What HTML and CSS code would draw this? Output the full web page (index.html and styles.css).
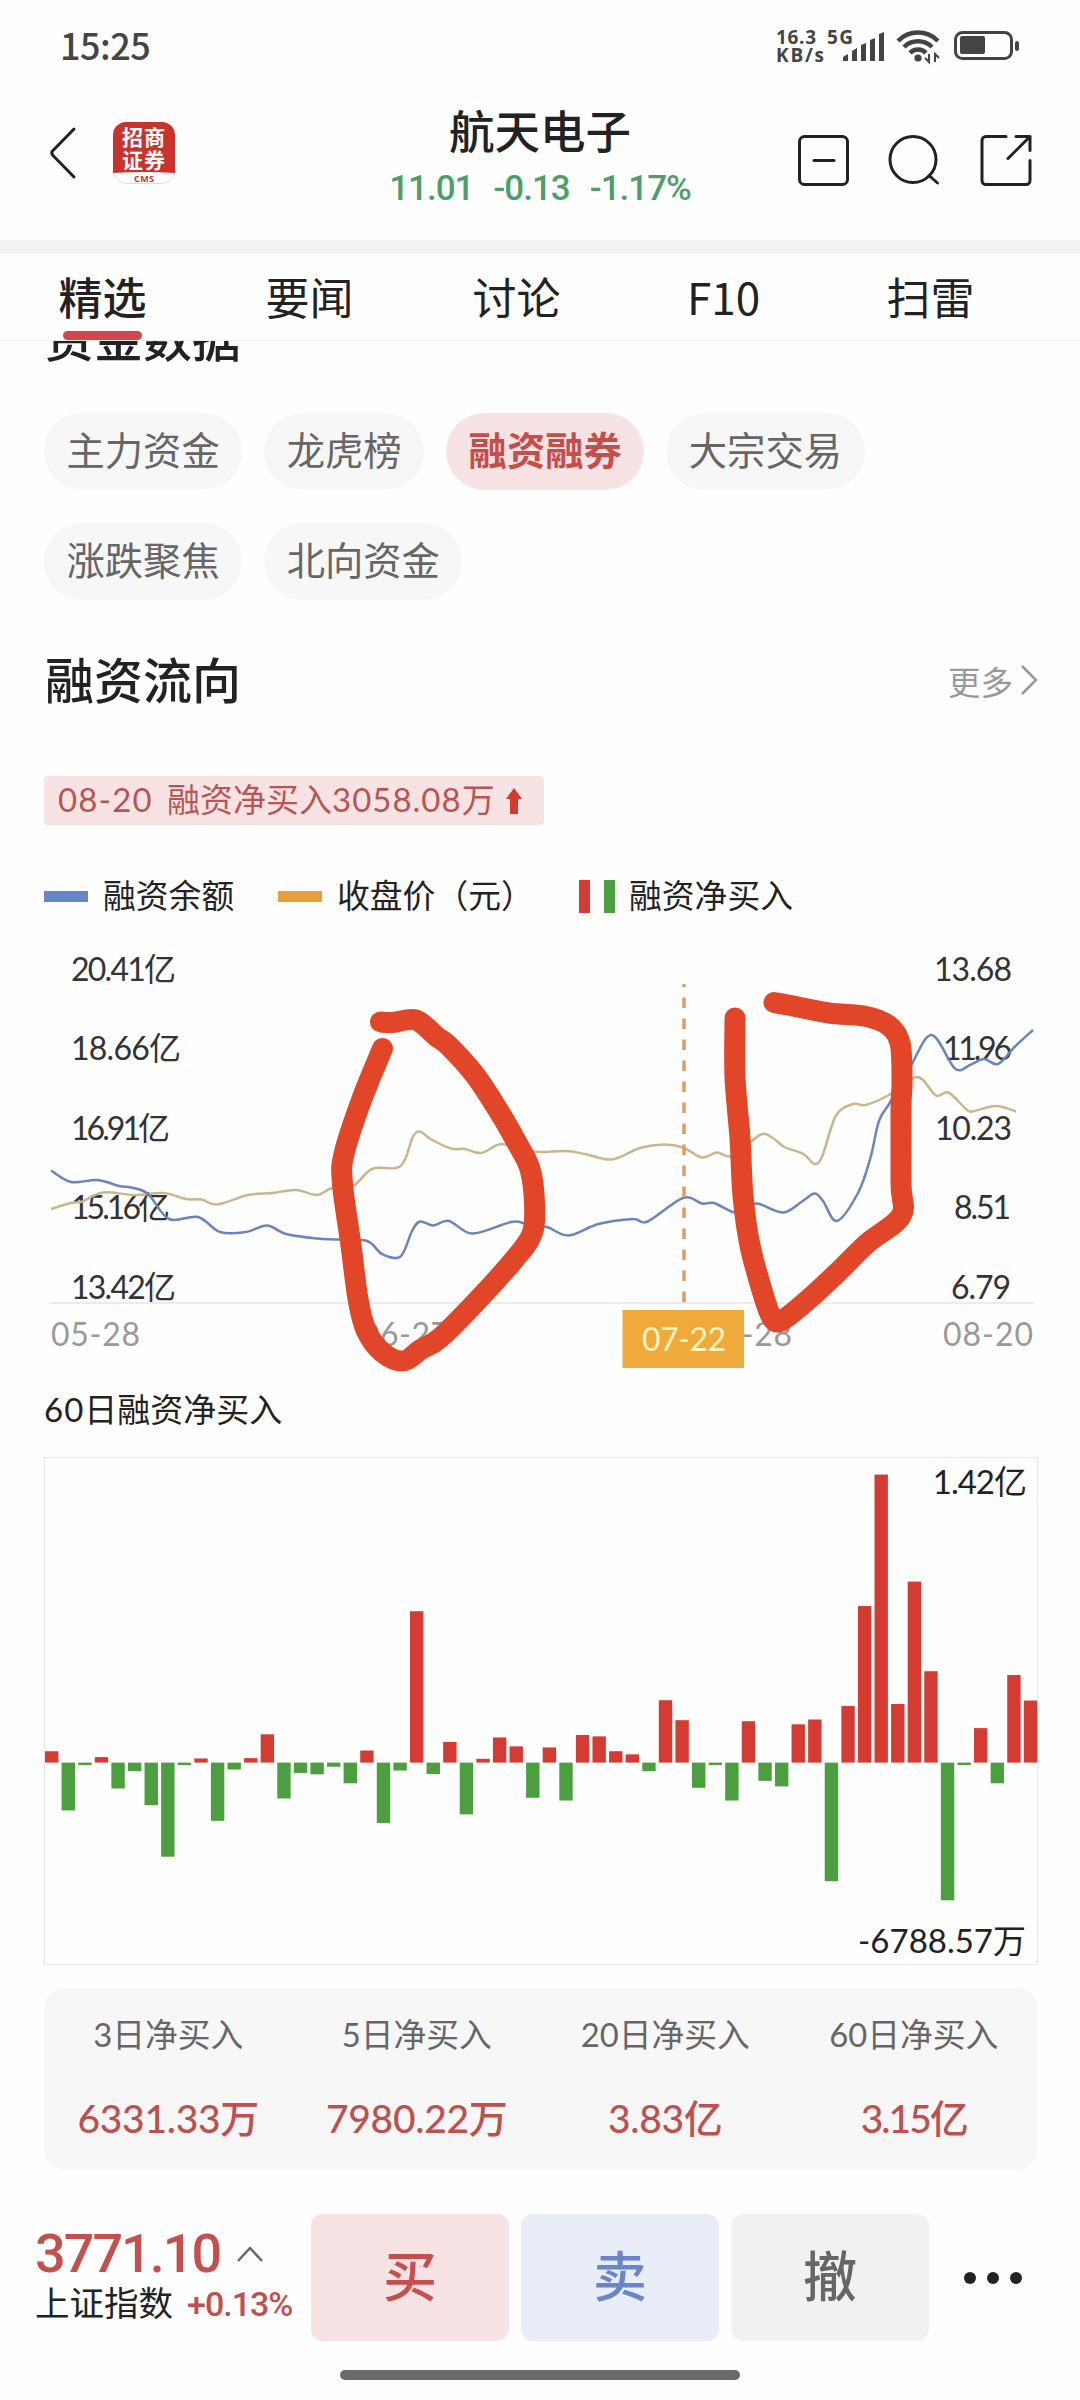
FILE: index.html
```html
<!DOCTYPE html>
<html lang="zh-CN">
  <head>
    <title>航天电子</title>
    <meta charset="UTF-8">
    <link rel="stylesheet" href="styles.css">
  </head>
  <body>
    <div class="status-bar">
      <span class="time">15:25</span>
      <svg class="status-icons" width="250" height="60" viewBox="770 15 250 60">
        <g class="net">
          <text x="776" y="44" textLength="40">16.3</text>
          <text x="776" y="62" textLength="48">KB/s</text>
          <text x="827" y="44" textLength="26">5G</text>
        </g>
        <path d="M843 61v-4l5-3v7zM852 61V51l5-3v13zM861 61V45l5-2v18zM870 61V40l5-2v23zM879 61V34l5-2v29z"/>
        <g class="wifi">
          <path d="M898 41a28 28 0 0 1 40 0"/>
          <path d="M904 47a20 20 0 0 1 28 0"/>
          <path d="M910 53a11 11 0 0 1 16 0"/>
        </g>
        <circle cx="918" cy="58" r="3.6"/>
        <path d="M929 54v8l-4-4M935 62v-8l4 4" class="thin"/>
        <rect x="955.5" y="32.5" width="56" height="26" rx="7" class="battery"/>
        <rect x="960" y="36" width="25" height="18" rx="2"/>
        <rect x="1015" y="41" width="4" height="10" rx="2"/>
      </svg>
    </div>

    <div class="header">
      <div class="header-left">
        <svg width="28" height="54" viewBox="0 0 28 54" class="line-icon"><path d="M25 3L3.500 25Q2 27 3.500 29L25 51"/></svg>
        <svg class="logo" width="62" height="62" viewBox="0 0 62 62">
          <rect x="0.500" y="0.500" width="61" height="61" rx="13" fill="#fff" stroke="#ddd"/>
          <path d="M0 51V13A13 13 0 0 1 13 0H49A13 13 0 0 1 62 13V51Q31 49 0 51z" fill="#c8342d"/>
          <text x="9" y="23" textLength="43" class="logo-cn">招商</text>
          <text x="9" y="46" textLength="43" class="logo-cn">证券</text>
          <text x="21" y="59.500" textLength="20" class="logo-en">CMS</text>
        </svg>
      </div>
      <div class="stock">
        <div class="stock-name">航天电子</div>
        <div class="stock-price"><span>11.01</span><span>-0.13</span><span>-1.17%</span></div>
      </div>
      <svg class="header-icons line-icon" width="240" height="60" viewBox="795 130 240 60">
        <rect x="799.500" y="136.500" width="48" height="48" rx="5"/>
        <path d="M814 160.500h20"/>
        <circle cx="913" cy="159.500" r="23"/>
        <path d="M929 175.500l8.500 7.500"/>
        <path d="M1006 136.500h-20a4 4 0 0 0-4 4v40a4 4 0 0 0 4 4h40a4 4 0 0 0 4-4v-20M1016 136.500h14v14M1030 136.500l-22 22"/>
      </svg>
    </div>

    <div class="tabs">
      <div class="tab active">精选</div>
      <div class="tab">要闻</div>
      <div class="tab">讨论</div>
      <div class="tab">F10</div>
      <div class="tab">扫雷</div>
    </div>

    <div class="content">
      <div class="clipped"><h2>资金数据</h2></div>

      <div class="chips">
        <span class="chip">主力资金</span>
        <span class="chip">龙虎榜</span>
        <span class="chip selected">融资融券</span>
        <span class="chip">大宗交易</span>
        <span class="chip">涨跌聚焦</span>
        <span class="chip">北向资金</span>
      </div>

      <div class="section-title">
        <h2>融资流向</h2>
        <span class="more">更多<svg width="18" height="32" viewBox="0 0 18 32"><path d="M2 2l14 14L2 30"/></svg></span>
      </div>

      <div class="tag">
        <span class="tag-date">08-20</span>
        <span>融资净买入<span class="num">3058.08</span>万</span>
        <svg width="16" height="26" viewBox="0 0 16 26"><path d="M8 0l8 11h-4v15H4V11H0z"/></svg>
      </div>

      <div class="legend">
        <span class="item"><i class="dash blue"></i>融资余额</span>
        <span class="item"><i class="dash orange"></i>收盘价（元）</span>
        <span class="item last"><i class="bar red"></i><i class="bar green"></i>融资净买入</span>
      </div>
    </div>

    <svg class="line-chart" width="1080" height="440" viewBox="0 940 1080 440">
      <g class="axis">
        <text x="71" y="981" textLength="105">20.41亿</text>
        <text x="71" y="1060" textLength="110">18.66亿</text>
        <text x="71" y="1140" textLength="99">16.91亿</text>
        <text x="71" y="1219" textLength="99">15.16亿</text>
        <text x="71" y="1299" textLength="105">13.42亿</text>
        <text x="934" y="981" textLength="78">13.68</text>
        <text x="943" y="1060" textLength="69">11.96</text>
        <text x="935" y="1140" textLength="77">10.23</text>
        <text x="954" y="1219" textLength="57">8.51</text>
        <text x="951" y="1299" textLength="60">6.79</text>
      </g>
      <path d="M50 1303H1034" stroke="#ebebeb" stroke-width="2"/>
      <g class="dates">
        <text x="51" y="1346" textLength="89">05-28</text>
        <text x="361" y="1346" textLength="88">06-27</text>
        <text x="703" y="1346" textLength="89">07-28</text>
        <text x="943" y="1346" textLength="90">08-20</text>
      </g>
      <path id="price" class="curve" stroke="#c9b68d"/>
      <path id="balance" class="curve" stroke="#6a85bb"/>
      <path d="M684 1302V984" stroke="#dd9c66" stroke-width="3.500" stroke-dasharray="10.500 10.500"/>
      <rect x="622.500" y="1310" width="121.500" height="58" fill="#f0a93b"/>
      <text x="642" y="1351" textLength="84" class="cursor-date">07-22</text>
      <path id="mark1" class="mark"/>
      <path id="mark2" class="mark"/>
    </svg>

    <div class="content">
      <div class="bar-title"><span class="num">60</span>日融资净买入</div>
      <div class="bar-chart">
        <svg id="bars" width="994" height="508" viewBox="44 1457 994 508"></svg>
        <span class="max">1.42亿</span>
        <span class="min">-6788.57万</span>
      </div>

      <div class="summary">
        <div><p>3日净买入</p><b>6331.33万</b></div>
        <div><p>5日净买入</p><b>7980.22万</b></div>
        <div><p>20日净买入</p><b>3.83亿</b></div>
        <div><p>60日净买入</p><b class="tight">3.15亿</b></div>
      </div>
    </div>

    <div class="footer">
      <div class="index">
        <div class="index-value">3771.10<svg width="28" height="18" viewBox="0 0 28 18"><path d="M2 16L14 3l12 13"/></svg></div>
        <div class="index-name">上证指数<span>+0.13%</span></div>
      </div>
      <div class="btn buy">买</div>
      <div class="btn sell">卖</div>
      <div class="btn cancel">撤</div>
      <div class="dots"><i></i><i></i><i></i></div>
    </div>
    <div class="home-bar"></div>

    <script src="chart.js"></script>
  </body>
</html>
```
FILE: styles.css
```css
* {
  box-sizing: border-box;
}

body {
  margin: 0;
  width: 1080px;
  height: 2400px;
  overflow: hidden;
  background: #fefefe;
  color: #222;
  font-family: Lato, "Noto Sans CJK SC", sans-serif;
}

h2, p {
  margin: 0;
}

/* status bar */
.status-bar {
  display: flex;
  justify-content: space-between;
  height: 92px;
  padding: 15px 60px 0 60px;
  color: #444;
}

.time {
  margin-top: 9px;
  font: 500 36px/40px "Noto Sans CJK SC", sans-serif;
  letter-spacing: -0.5px;
}

.status-icons {
  fill: #444;
}

.net {
  font: bold 19px "Open Sans", sans-serif;
}

.wifi, .thin, .battery {
  fill: none;
  stroke: #444;
}

.wifi {
  stroke-width: 4.5;
}

.thin {
  stroke-width: 2;
}

.battery {
  stroke-width: 3;
}

/* header */
.header {
  display: flex;
  justify-content: space-between;
  height: 162px;
  padding: 0 45px 0 49px;
  border-bottom: 14px solid #f2f3f5;
}

.line-icon {
  fill: none;
  stroke: #222;
  stroke-width: 3;
  stroke-linecap: round;
  stroke-linejoin: round;
}

.header-left {
  display: flex;
  align-items: center;
  gap: 36px;
  width: 240px;
  height: 122px;
}

.logo-cn {
  fill: #fff;
  font: bold 21px "Noto Sans CJK SC", sans-serif;
}

.logo-en {
  fill: #c8342d;
  font: bold 9px "Open Sans", sans-serif;
}

.stock {
  width: 320px;
  margin-right: 4px;
  text-align: center;
}

.stock-name {
  margin-top: 10px;
  font-size: 45.5px;
  line-height: 60px;
  font-weight: 500;
}

.stock-price {
  display: flex;
  justify-content: center;
  gap: 20px;
  padding-top: 2px;
  color: #4f9e68;
  font: 500 35px/50px Roboto, sans-serif;
  letter-spacing: -1px;
}

.header-icons {
  margin-top: 38px;
}

/* tabs */
.tabs {
  display: flex;
  height: 87px;
  border-bottom: 1px solid #ececec;
}

.tab {
  display: flex;
  flex-direction: column;
  align-items: center;
  width: 207px;
  padding: 12px 2px 0 0;
  font: 44px/60px "Noto Sans CJK SC", sans-serif;
}

.active {
  font-weight: 500;
}

.active::after {
  content: "";
  width: 79px;
  height: 9px;
  margin-top: 5px;
  border-radius: 5px;
  background: #d2484a;
}

.content {
  padding: 0 42px 0 44px;
}

h2 {
  padding-left: 1px;
  font-size: 49px;
  line-height: 60px;
  font-weight: 500;
}

.clipped {
  height: 72px;
  overflow: hidden;
}

.clipped h2 {
  margin-top: -33px;
}

/* filter chips */
.chips {
  display: flex;
  flex-wrap: wrap;
  gap: 33px 22px;
  width: 900px;
}

.chip {
  height: 77px;
  padding: 0 22.5px;
  border-radius: 39px;
  background: #f7f7f7;
  color: #666;
  font-size: 38.3px;
  line-height: 75px;
}

.selected {
  background: #f7e3e3;
  color: #c44e4c;
  font-weight: bold;
}

.section-title {
  display: flex;
  justify-content: space-between;
  align-items: center;
  height: 60px;
  margin-top: 50px;
}

.more {
  display: flex;
  align-items: center;
  gap: 7px;
  color: #999;
  font-size: 32.5px;
}

.more svg {
  fill: none;
  stroke: #999;
  stroke-width: 2.5;
}

.tag {
  display: flex;
  align-items: center;
  width: 500px;
  height: 49px;
  margin-top: 66px;
  padding-left: 14px;
  border-radius: 4px;
  background: #f7e3e3;
  color: #b85553;
  font-size: 33px;
  line-height: 44px;
}

.tag > span {
  margin-bottom: 3px;
}

.tag-date {
  width: 109px;
  letter-spacing: 1.2px;
}

.tag .num {
  letter-spacing: 1px;
}

.tag svg {
  margin-left: 11px;
  fill: #d33a32;
}

.legend {
  display: flex;
  height: 46px;
  margin-top: 48px;
  font-size: 32.8px;
  line-height: 46px;
}

.item {
  display: flex;
  align-items: center;
  width: 234px;
  white-space: nowrap;
}

.item:nth-child(2) {
  width: 301px;
}

.dash {
  width: 44px;
  height: 11px;
  margin-right: 15px;
}

.bar {
  width: 11px;
  height: 33px;
  margin-right: 14px;
}

.blue {
  background: #6786ca;
}

.orange {
  background: #eaa03a;
}

.red {
  background: #d43c33;
}

.green {
  background: #4b9f3e;
}

/* line chart */
.line-chart {
  display: block;
  margin-top: 21px;
}

.axis {
  fill: #333;
  font-size: 32px;
}

.dates {
  fill: #999;
  font-size: 32px;
}

.cursor-date {
  fill: #fff5c0;
  font-size: 32px;
}

.curve {
  fill: none;
  stroke-width: 2.5;
}

.mark {
  fill: none;
  stroke: #e14628;
  stroke-width: 21;
  stroke-linecap: round;
  stroke-linejoin: round;
}

/* bar chart */
.bar-title {
  height: 77px;
  padding-top: 6px;
  font-size: 33px;
  line-height: 46px;
}

.bar-title .num {
  letter-spacing: 1px;
}

.bar-chart {
  position: relative;
  height: 508px;
  box-shadow: inset 0 0 0 1px #e6e6e6;
}

.bar-chart svg {
  display: block;
}

.max, .min {
  position: absolute;
  right: 12px;
  font-size: 33px;
  line-height: 46px;
}

.max {
  top: 1px;
  letter-spacing: -1px;
}

.min {
  bottom: 2px;
}

.summary {
  display: flex;
  height: 182px;
  margin-top: 23px;
  border-radius: 21px;
  background: #f7f7f7;
  text-align: center;
}

.summary div {
  flex: 1;
}

.summary p {
  margin-top: 24px;
  color: #666;
  font-size: 32.8px;
  line-height: 46px;
}

.summary b {
  display: block;
  margin-top: 32px;
  color: #bd514f;
  font-size: 39px;
  line-height: 56px;
  font-weight: 500;
  letter-spacing: -0.3px;
}

.summary .tight {
  letter-spacing: -2px;
}

/* footer */
.footer {
  display: flex;
  gap: 12px;
  height: 127px;
  margin-top: 44px;
  padding-left: 35px;
}

.index {
  width: 264px;
  padding-top: 9px;
  white-space: nowrap;
}

.index-value {
  display: flex;
  align-items: center;
  gap: 16px;
  height: 62px;
  color: #c4504e;
  font: 500 54px/60px Roboto, sans-serif;
  letter-spacing: -2px;
}

.index-value path {
  fill: none;
  stroke: #666;
  stroke-width: 2.5;
}

.index-name {
  font-size: 34.500px;
  line-height: 36px;
}

.index-name span {
  margin-left: 14px;
  color: #bd514f;
  font: 500 34px/36px Roboto, sans-serif;
  letter-spacing: -1px;
}

.btn {
  width: 198px;
  border-radius: 12px;
  font-size: 54px;
  line-height: 126px;
  font-weight: 500;
  text-align: center;
}

.buy {
  background: #f7e3e3;
  color: #c4504e;
}

.sell {
  background: #e8edf8;
  color: #6a86c6;
}

.cancel {
  background: #f1f1f1;
  color: #666;
}

.dots {
  display: flex;
  align-items: center;
  gap: 11px;
  padding-left: 23px;
}

.dots i {
  width: 12px;
  height: 12px;
  border-radius: 50%;
  background: #222;
}

.home-bar {
  width: 400px;
  height: 10px;
  margin: 29px auto 0;
  border-radius: 5px;
  background: #6a6a6a;
}
```
FILE: chart.js
```js
var balance = [[51,1170.5],[71,1182],[97.5,1180],[119,1186],[131,1187.5],[148,1194],[169,1219],[198,1217],[220,1232],[246,1232],[267,1225.5],[286,1234],[317,1238.5],[336,1239.5],[367,1241],[382,1254],[400.5,1256.5],[412,1231],[420,1221.5],[433,1225.5],[449,1221],[472.5,1233.5],[511,1222],[527,1224],[547,1227],[568.5,1235.5],[598.5,1224],[633,1219],[647.5,1221.5],[683,1198],[702,1203.5],[714,1203],[733,1212],[745,1210],[757,1203.5],[783,1212.5],[802,1201.5],[814.5,1193.5],[823,1201],[837,1221],[858.5,1192],[870.5,1157.5],[879,1121],[890,1102.5],[910,1067.5],[931.5,1035],[955,1068.5],[970,1065],[984,1059],[998,1064],[1015,1046.5],[1033,1030]];

var price = [[51,1209],[70.5,1203],[82.5,1201.5],[103,1192.5],[134,1195],[163.5,1193],[186,1199],[201.5,1199.5],[217,1204.5],[248,1195],[272,1193],[296,1190],[317,1195],[332,1188],[353,1186],[372,1169],[396,1168],[405,1159.5],[413,1136.5],[420,1131.5],[430.5,1139],[451,1148.5],[465,1149],[481,1153],[501,1144],[520,1150],[540,1152],[566,1151],[585,1154],[612,1159.5],[640,1148],[664,1144.5],[683,1147.5],[702,1157.5],[717,1152.5],[733,1156],[760,1135],[772,1137.5],[784.5,1147],[803.5,1154],[814.5,1164],[822.5,1155.5],[836,1115.5],[853,1104],[865.5,1105],[888,1095.5],[917,1077],[936,1095.5],[948.5,1092.5],[967,1110],[974,1111],[996,1106],[1016,1111.5]];

var mark1 = [[380.5,1022],[393,1022.5],[416,1020],[437,1037],[448,1045],[475,1075],[499,1111.5],[516.5,1142],[530,1169],[534.5,1203.5],[532,1234],[513,1261],[475,1303],[440,1338],[420,1350],[403,1361],[382,1352],[366,1330],[358,1299],[351,1245.5],[342.5,1184],[344,1154],[361.5,1100],[382.5,1048.5]];

var mark2 = [[774,1002.5],[788,1005],[829,1013],[864,1016],[888,1025],[900,1043],[902,1081],[901,1108],[901,1184],[901,1216],[867,1243.5],[836,1274],[802,1305],[781,1321],[772,1318],[764,1297],[750,1245.5],[743,1196],[740,1138.5],[735,1077],[735,1018]];

// smooth curve through the points
function curve(p) {
  var d = 'M' + p[0];
  for (var i = 0; i < p.length - 1; i++) {
    var a = p[i - 1] || p[i], b = p[i], c = p[i + 1], e = p[i + 2] || c;
    d += 'C' + (b[0] + (c[0] - a[0]) / 6) + ',' + (b[1] + (c[1] - a[1]) / 6) + ' ' +
      (c[0] - (e[0] - b[0]) / 6) + ',' + (c[1] - (e[1] - b[1]) / 6) + ' ' + c;
  }
  return d;
}

document.getElementById('balance').setAttribute('d', curve(balance));
document.getElementById('price').setAttribute('d', curve(price));
document.getElementById('mark1').setAttribute('d', curve(mark1));
document.getElementById('mark2').setAttribute('d', curve(mark2));

// daily net purchase, 万
var net = [560,-2360,-119,272,-1275,-425,-2090,-4640,-119,204,-2870,-340,221,1394,-1768,-510,-578,-204,-1020,595,-2975,-391,7463,-561,1020,-2550,187,1241,799,-1734,748,-1870,1360,1292,561,408,-425,3077,2091,-1241,-119,-1870,2040,-901,-1173,1887,2125,-5848,2788,7718,14200,2890,8925,4505,-6788,-119,1700,-1020,4318,3060];
var html = '';
net.forEach(function (v, i) {
  var h = Math.abs(v) / 49.3;
  html += '<rect x="' + (45 + i * 16.59) + '" y="' + (v > 0 ? 1762.6 - h : 1762.6) +
    '" width="13.4" height="' + h + '" fill="' + (v > 0 ? '#d43c33' : '#4b9f3e') + '"/>';
});
document.getElementById('bars').innerHTML = html;
```
